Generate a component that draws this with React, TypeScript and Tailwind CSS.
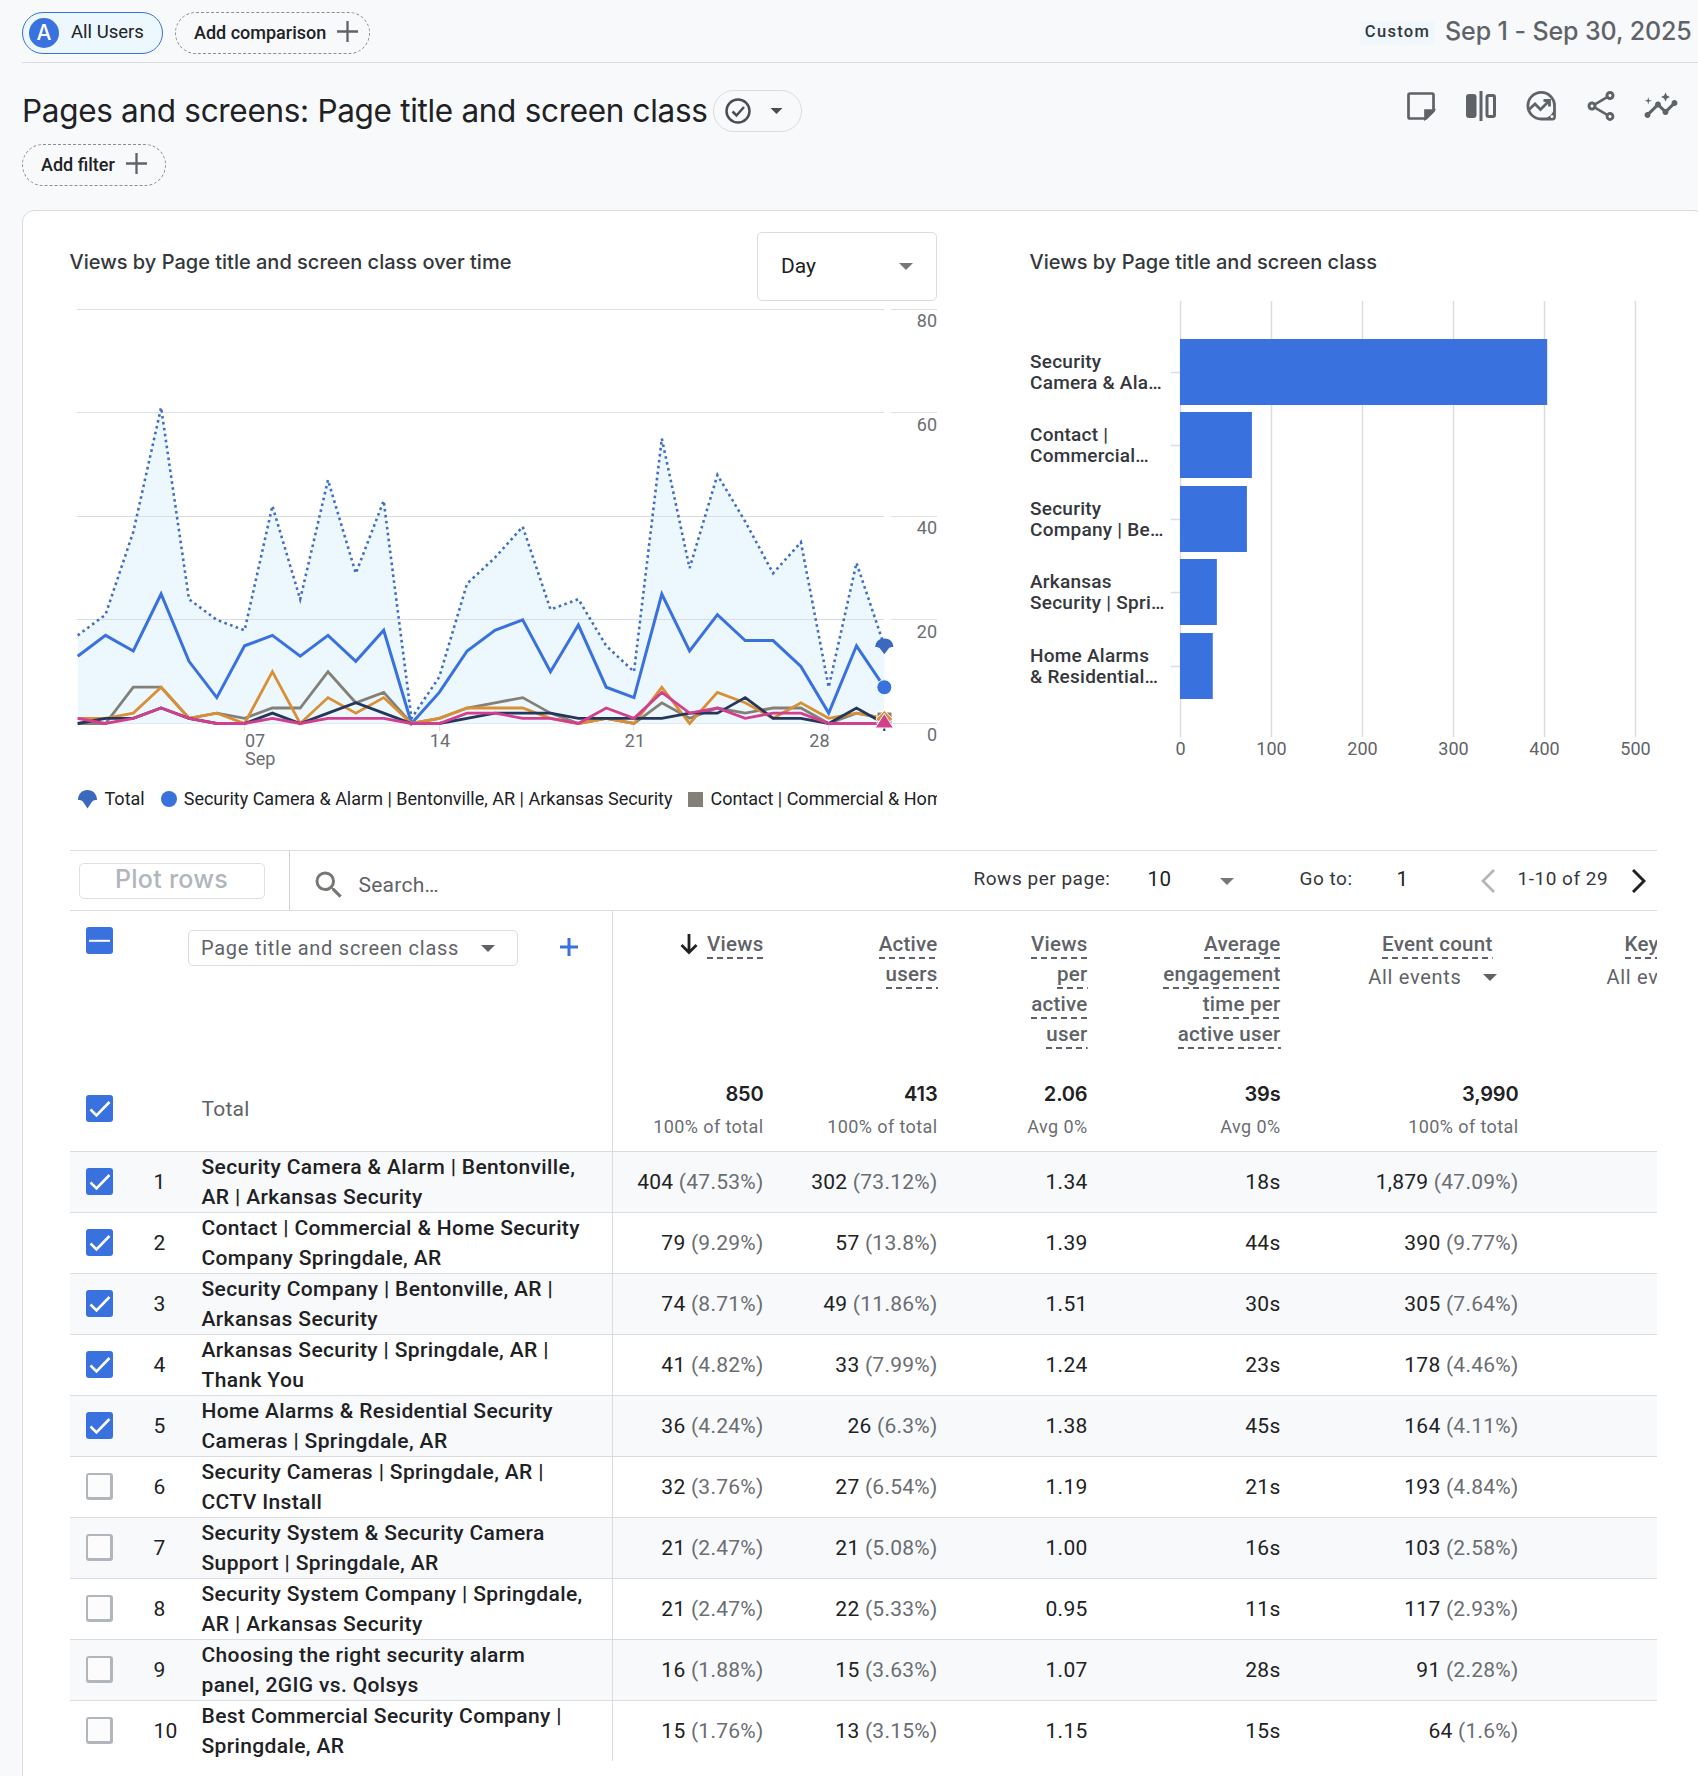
import React from "react";
import { MdInsights, MdOutlineShare, MdSearch } from "react-icons/md";

const TOTAL = [17, 21, 37, 61, 24, 20, 18, 42, 24, 47, 29, 43, 1, 9, 27, 32, 38, 22, 24, 15, 10, 55, 30, 48, 39, 29, 35, 7, 31, 15];
const CAMERA = [13, 17, 14, 25, 12, 5, 15, 17, 13, 17, 12, 18, 0, 6, 14, 18, 20, 10, 19, 7, 5, 25, 14, 21, 16, 16, 11, 2, 15, 7];
const CONTACT = [0, 0, 7, 7, 1, 2, 1, 3, 3, 10, 4, 6, 0, 1, 3, 4, 5, 2, 0, 1, 0, 4, 1, 3, 2, 3, 3, 0, 2, 1];
const COMPANY = [1, 1, 2, 7, 1, 2, 0, 10, 0, 5, 2, 5, 0, 1, 3, 3, 3, 1, 0, 1, 0, 7, 0, 6, 4, 1, 4, 1, 2, 1];
const ARKANSAS = [0, 1, 1, 3, 1, 0, 0, 2, 0, 2, 4, 2, 0, 0, 1, 2, 2, 2, 1, 1, 1, 1, 2, 2, 5, 1, 1, 0, 3, 0];
const HOME = [1, 0, 1, 3, 1, 0, 0, 1, 0, 1, 1, 1, 0, 0, 2, 2, 1, 1, 0, 3, 1, 6, 2, 3, 1, 2, 2, 0, 0, 0];

const px = (i: number) => 7.7 + i * 27.814;
const py = (v: number) => 423.5 - v * 5.18;
const points = (data: number[]) => data.map((v, i) => `${px(i).toFixed(1)},${py(v).toFixed(1)}`).join(" ");

const GOOGLE = "font-['Inter','Roboto',sans-serif]";

function Caret({ className = "" }: { className?: string }) {
  return (
    <svg className={className} width="14" height="7" viewBox="0 0 14 7">
      <path d="M0 0h14L7 7z" fill="currentColor" />
    </svg>
  );
}

function Plus({ size = 21, className = "" }: { size?: number; className?: string }) {
  return (
    <svg className={className} width={size} height={size} viewBox="0 0 21 21">
      <path d="M10.500 0v21M0 10.500h21" stroke="currentColor" strokeWidth="2.300" />
    </svg>
  );
}

const UMBRELLA = "M0 10C0 4 4 0 9.500 0S19 4 19 10c-2.500 0-4.500.5-5.500 2.500l-4 6-4-6C4.500 10.500 2.500 10 0 10z";

function LineChart() {
  return (
    <svg width="867" height="480" viewBox="0 0 867 480" className="block font-['Roboto',sans-serif]">
      {[80, 60, 40, 20, 0].map((v) => (
        <path key={v} d={`M7 ${Math.floor(py(v)) + 0.5}H814M821 ${Math.floor(py(v)) + 0.5}H867`} stroke="#dcdfe3" strokeWidth="1" />
      ))}
      <polygon points={`${px(0)},${py(0)} ${points(TOTAL)} ${px(29)},${py(0)}`} fill="#ecf7fe" />
      {[40, 20].map((v) => (
        <path key={v} d={`M7 ${Math.floor(py(v)) + 0.5}H814`} stroke="#d9dde1" strokeWidth="1" />
      ))}
      {[6, 13, 20, 27].map((i) => (
        <path key={i} d={`M${Math.floor(px(i)) + 0.5} 424v7`} stroke="#dfe2e6" strokeWidth="1" />
      ))}
      <g fill="none" strokeWidth="2.800" strokeLinejoin="miter">
        <polyline points={points(TOTAL)} stroke="#3f6fc4" strokeWidth="2.600" strokeDasharray="2.600 3.400" />
        <polyline points={points(CAMERA)} stroke="#3971de" strokeWidth="3" />
        <polyline points={points(CONTACT)} stroke="#838078" />
        <polyline points={points(COMPANY)} stroke="#d98f33" />
        <polyline points={points(ARKANSAS)} stroke="#24365c" />
        <polyline points={points(HOME)} stroke="#d23f8e" />
      </g>
      <path transform="translate(805.3 338.5) scale(.95 .85)" d={UMBRELLA} fill="#3b69bd" />
      <circle cx={px(29)} cy={py(7)} r="7.500" fill="#3971de" stroke="#fff" strokeWidth="1" />
      <path d="M807 412h15v12h-15z" fill="#838078" stroke="#fff" />
      <path d="M814.300 410.500l8.500 8.500-8.500 8.500-8.500-8.500z" fill="#d98f33" stroke="#fff" />
      <path d="M814.300 428v3" stroke="#24365c" strokeWidth="2" />
      <path d="M814.300 413.500l9.200 14.500h-18.400z" fill="#d23f8e" stroke="#fff" />
      <g fontSize="18" fill="#6a6d72">
        {[80, 60, 40, 20, 0].map((v) => (
          <text key={v} x="867" y={v === 60 || v === 20 ? py(v) + 18.3 : py(v) + 17.5} textAnchor="end">{v}</text>
        ))}
        <text x="175" y="447">07</text>
        <text x="175" y="465">Sep</text>
        <text x="380" y="447" textAnchor="end">14</text>
        <text x="575" y="447" textAnchor="end">21</text>
        <text x="759.5" y="447" textAnchor="end">28</text>
      </g>
    </svg>
  );
}

const BARS = [
  { y: 39, value: 403.5, lines: ["Security", "Camera & Ala…"] },
  { y: 112, value: 79, lines: ["Contact |", "Commercial…"] },
  { y: 186, value: 73.5, lines: ["Security", "Company | Be…"] },
  { y: 259, value: 40.5, lines: ["Arkansas", "Security | Spri…"] },
  { y: 333, value: 36, lines: ["Home Alarms", "& Residential…"] },
];

function BarChart() {
  return (
    <svg width="640" height="480" viewBox="0 0 640 480" className="block font-['Roboto',sans-serif]">
      {[0, 1, 2, 3, 4, 5].map((i) => (
        <g key={i}>
          <path d={`M${150.5 + i * 91} 1V437`} stroke="#d9dde1" strokeWidth="1.500" />
          <text x={150.5 + i * 91} y="455" fontSize="18" fill="#5f6368" textAnchor="middle">{i * 100}</text>
        </g>
      ))}
      {BARS.map((b) => (
        <g key={b.y}>
          <path d={`M141 ${b.y + 33.5}h9`} stroke="#d9dde1" strokeWidth="1.500" />
          <rect x="150" y={b.y} width={b.value * 0.91} height="66" fill="#3971de" />
          <text x="0" y={b.y + 29} fontSize="19" fontWeight="500" fill="#34373c" letterSpacing="0.25">{b.lines[0]}</text>
          <text x="0" y={b.y + 50.4} fontSize="19" fontWeight="500" fill="#34373c" letterSpacing="0.25">{b.lines[1]}</text>
        </g>
      ))}
    </svg>
  );
}

function Checkbox({ state }: { state: "on" | "off" | "mixed" }) {
  if (state === "off") return <div className="flex size-[27px] rounded-[3px] bg-[#b1b6bd] p-[2.500px]"><div className="flex-1 rounded-[1px] bg-[#fcfcfd]" /></div>;
  return (
    <div className="flex size-[27px] items-center justify-center rounded-[3px] bg-[#3971de]">
      <svg width="27" height="27" viewBox="0 0 27 27" fill="none" stroke="#fff" strokeWidth="2.600">
        {state === "on" ? <path d="M4.500 14.500l6 6L23.500 7" /> : <path d="M3 13.800h21" strokeWidth="2" />}
      </svg>
    </div>
  );
}

function Term({ children }: { children: React.ReactNode }) {
  return (
    <span className="block h-[30px] text-[20.500px] leading-[26px] font-medium whitespace-nowrap">
      <span className="inline-block h-[28px] bg-[repeating-linear-gradient(90deg,#5f6368_0_6px,transparent_6px_10px)] bg-[length:100%_2px] bg-bottom bg-no-repeat">
        {children}
      </span>
    </span>
  );
}

const ROWS: [string, string, boolean, string[], string[], string, string, string[]][] = [
  ["Security Camera & Alarm | Bentonville,", "AR | Arkansas Security", true, ["404", "(47.53%)"], ["302", "(73.12%)"], "1.34", "18s", ["1,879", "(47.09%)"]],
  ["Contact | Commercial & Home Security", "Company Springdale, AR", true, ["79", "(9.29%)"], ["57", "(13.8%)"], "1.39", "44s", ["390", "(9.77%)"]],
  ["Security Company | Bentonville, AR |", "Arkansas Security", true, ["74", "(8.71%)"], ["49", "(11.86%)"], "1.51", "30s", ["305", "(7.64%)"]],
  ["Arkansas Security | Springdale, AR |", "Thank You", true, ["41", "(4.82%)"], ["33", "(7.99%)"], "1.24", "23s", ["178", "(4.46%)"]],
  ["Home Alarms & Residential Security", "Cameras | Springdale, AR", true, ["36", "(4.24%)"], ["26", "(6.3%)"], "1.38", "45s", ["164", "(4.11%)"]],
  ["Security Cameras | Springdale, AR |", "CCTV Install", false, ["32", "(3.76%)"], ["27", "(6.54%)"], "1.19", "21s", ["193", "(4.84%)"]],
  ["Security System & Security Camera", "Support | Springdale, AR", false, ["21", "(2.47%)"], ["21", "(5.08%)"], "1.00", "16s", ["103", "(2.58%)"]],
  ["Security System Company | Springdale,", "AR | Arkansas Security", false, ["21", "(2.47%)"], ["22", "(5.33%)"], "0.95", "11s", ["117", "(2.93%)"]],
  ["Choosing the right security alarm", "panel, 2GIG vs. Qolsys", false, ["16", "(1.88%)"], ["15", "(3.63%)"], "1.07", "28s", ["91", "(2.28%)"]],
  ["Best Commercial Security Company |", "Springdale, AR", false, ["15", "(1.76%)"], ["13", "(3.15%)"], "1.15", "15s", ["64", "(1.6%)"]],
];

const GRID = "grid grid-cols-[84px_48px_411px_151px_174px_150px_193px_238px_138px]";

function Pair({ v }: { v: string[] }) {
  return (
    <div className="pt-[2px] text-right whitespace-nowrap">
      {v[0]} <span className="text-[#6a6d72]">{v[1]}</span>
    </div>
  );
}

function Totals({ a, b }: { a: string; b: string }) {
  return (
    <div className="pt-[2px] text-right whitespace-nowrap">
      <div className={`${GOOGLE} h-[30px] text-[20px] leading-[32px] font-semibold tracking-[-0.150px] text-[#202124]`}>{a}</div>
      <div className="mt-[4px] text-[18px] leading-[30px] tracking-[0.400px] text-[#6a6d72]">{b}</div>
    </div>
  );
}

export default function App() {
  return (
    <div className="h-[1776px] w-[1698px] overflow-hidden bg-[#f8f9fb] pl-[22px] font-['Roboto',sans-serif] text-[#202124]">
      <header className="flex h-[63px] items-start border-b-[1.500px] border-[#dadce0] pt-[12px]">
        <div className="flex h-[42px] w-[141px] items-center rounded-full border-[1.500px] border-[#3971de] bg-[#ecf7fe] pl-[6px]">
          <div className={`${GOOGLE} flex size-[30px] items-center justify-center rounded-full bg-[#3971de] text-[21px] font-medium text-white`}>A</div>
          <span className="ml-[12px] text-[18.500px] whitespace-nowrap">All Users</span>
        </div>
        <div className="ml-[12px] flex h-[42px] w-[195px] items-center rounded-full border border-dashed border-[#8a8e93] pl-[18px]">
          <span className="pb-[2px] text-[18px] font-medium whitespace-nowrap">Add comparison</span>
          <Plus className="-mt-[3px] ml-[11px] text-[#5f6368]" />
        </div>
        <div className="ml-auto flex items-center pr-[4px]">
          <div className="mt-[5px] flex h-[24px] w-[75px] items-center justify-center bg-[#f0f7fd] text-[16.500px] font-medium tracking-[1.300px] text-[#34373c]">Custom</div>
          <div className={`${GOOGLE} mt-[2px] ml-[10px] w-[249px] text-[25px] leading-[34px] font-medium tracking-[-0.100px] whitespace-nowrap text-[#5f6368]`}>Sep 1 - Sep 30, 2025</div>
        </div>
      </header>

      <div className="flex h-[81px] items-start justify-between pt-[27px]">
        <div className="flex items-center">
          <h1 className={`${GOOGLE} w-[691px] text-[31.500px] leading-[42px] tracking-[-0.310px] whitespace-nowrap`}>Pages and screens: Page title and screen class</h1>
          <div className="flex h-[42px] w-[89px] items-center rounded-full border border-[#dadce0] pl-[11px] text-[#4a4d51]">
            <svg width="26" height="26" viewBox="0 0 26 26" fill="none" stroke="currentColor" strokeWidth="2.500">
              <circle cx="13" cy="13" r="11.500" />
              <path d="M7.500 13.500l4 4L19 9" />
            </svg>
            <Caret className="ml-[19px] h-[6px] w-[13px]" />
          </div>
        </div>
        <div className="-mt-[2px] flex gap-[24px] pr-[19px] text-[#5f6368]">
          <svg width="36" height="36" viewBox="0 0 36 36" fill="none" stroke="currentColor" strokeWidth="2.700">
            <path d="M7 5.500h22a1.500 1.500 0 0 1 1.500 1.500v16l-7.500 7.500H7A1.500 1.500 0 0 1 5.500 29V7A1.500 1.500 0 0 1 7 5.500z" />
            <path d="M22.500 30v-7.500h7.500z" fill="currentColor" />
          </svg>
          <svg width="36" height="36" viewBox="0 0 36 36" fill="currentColor">
            <rect x="3" y="6" width="10.500" height="24" rx="3" />
            <rect x="16.500" y="3" width="3" height="30" />
            <rect x="24" y="7.500" width="7.500" height="21" rx="1.500" fill="none" stroke="currentColor" strokeWidth="3" />
          </svg>
          <svg width="36" height="36" viewBox="0 0 36 36" fill="none" stroke="currentColor" strokeWidth="2.800">
            <path d="M31.500 17.500A13.300 13.300 0 1 0 18.200 31h11.300a2 2 0 0 0 2-2z" />
            <path d="M19 31c6-.5 11.500-5 12.500-12v12z" fill="currentColor" stroke="none" />
            <path d="M5.500 22l6.500-6 5.500 5.500 8.500-8.500M20.500 12.500h6v6" />
            <circle cx="29" cy="28.500" r="1.500" fill="#f8f9fb" stroke="none" />
          </svg>
          <MdOutlineShare size={36} />
          <MdInsights size={36} />
        </div>
      </div>

      <div className="flex h-[42px] w-[144px] items-center rounded-full border border-dashed border-[#8a8e93] pl-[18px]">
        <span className="pb-[2px] text-[18px] font-medium whitespace-nowrap">Add filter</span>
        <Plus className="-mt-[3px] ml-[11px] text-[#5f6368]" />
      </div>

      <main className="mt-[24px] h-[1600px] w-[1684px] rounded-[12px] border-[1.500px] border-[#dadce0] bg-white pl-[46.500px]">
        <section className="flex h-[639px]">
          <div className="w-[960px]">
            <div className="flex h-[89px] w-[867px] items-start justify-between pt-[21px]">
              <h2 className={`${GOOGLE} mt-[15px] text-[20px] leading-[30px] font-medium whitespace-nowrap text-[#34373c]`}>Views by Page title and screen class over time</h2>
              <div className="flex h-[69px] w-[180px] items-center justify-between rounded-[5px] border-[1.500px] border-[#dadce0] pr-[23px] pl-[23.500px] text-[21px]">
                Day
                <Caret className="text-[#757873]" />
              </div>
            </div>
            <LineChart />
            <div className="mt-[7px] flex w-[867px] items-center overflow-hidden pl-[8px] text-[18px] leading-[24px] whitespace-nowrap">
              <svg width="19" height="19" viewBox="0 0 19 19" className="shrink-0">
                <path d={UMBRELLA} fill="#3b69bd" />
              </svg>
              <span className="ml-[8px]">Total</span>
              <span className="ml-[16px] size-[16px] shrink-0 rounded-full bg-[#3971de]" />
              <span className="ml-[7px]">Security Camera &amp; Alarm | Bentonville, AR | Arkansas Security</span>
              <span className="ml-[16px] size-[15px] shrink-0 bg-[#838078]" />
              <span className="ml-[7px]">Contact | Commercial &amp; Home Security</span>
            </div>
          </div>
          <div className="w-[640px]">
            <h2 className={`${GOOGLE} mt-[36px] mb-[23px] text-[20px] leading-[30px] font-medium whitespace-nowrap text-[#34373c]`}>Views by Page title and screen class</h2>
            <BarChart />
          </div>
        </section>

        <section className="w-[1587px] overflow-hidden text-[21px] tracking-[0.250px]">
          <div className="flex h-[61px] items-center border-y-[1.500px] border-[#dadce0]">
            <div className="flex h-full w-[220px] items-center border-r border-[#d0d3d7] pl-[9px]">
              <div className={`${GOOGLE} flex h-[36px] w-[186px] items-center justify-center rounded-[5px] border border-[#dbe0e5] pb-[2px] text-[25px] font-medium text-[#b1b6bd]`}>Plot rows</div>
            </div>
            <MdSearch className="mt-[8px] ml-[21px] text-[#757873]" size={36} />
            <span className="mt-[10px] ml-[12px] text-[#5f6368]">Search…</span>
            <div className="ml-auto flex h-full items-center pb-px text-[19px] tracking-[0.520px] text-[#34373c]">
              <span className="w-[174px] pb-[2px]">Rows per page:</span>
              <span className="w-[72px] pb-[2px] text-[20.500px] text-[#202124]">10</span>
              <Caret className="mt-[2px] text-[#757873]" />
              <span className="ml-[66px] w-[97px] pb-[2px]">Go to:</span>
              <span className="w-[84px] pb-[2px] text-[20.500px] text-[#202124]">1</span>
              <svg className="mt-[2px]" width="14" height="24" viewBox="0 0 14 24" fill="none" stroke="#b1b6bd" strokeWidth="2.700"><path d="M13 1L2 12l11 11" /></svg>
              <span className="ml-[23px] w-[114px] pb-[2px]">1-10 of 29</span>
              <svg className="mt-[2px] mr-[11px]" width="14" height="24" viewBox="0 0 14 24" fill="none" stroke="#202124" strokeWidth="3"><path d="M1 1l11 11L1 23" /></svg>
            </div>
          </div>

          <div className={`${GRID} h-[165px] text-[20px] text-[#5f6368]`}>
            <div className="pt-[16px] pl-[16px]"><Checkbox state="mixed" /></div>
            <div className="col-span-2 flex border-r-[1.500px] border-[#dadce0] pt-[19px] pl-[34px]">
              <div className="flex h-[36px] w-[330px] items-center rounded-[5px] border border-[#dadce0] pl-[12.500px]">
                <span className="w-[279.500px] tracking-[0.740px] whitespace-nowrap">Page title and screen class</span>
                <Caret />
              </div>
              <svg className="mt-[8px] ml-[42px]" width="18" height="18" viewBox="0 0 18 18"><path d="M9 0v18M0 9h18" stroke="#3971de" strokeWidth="3" /></svg>
            </div>
            <div className="flex justify-end pt-[20px]">
              <svg className="mt-[3px] mr-[9px]" width="18" height="21" viewBox="0 0 18 21" fill="none" stroke="#202124" strokeWidth="2.800"><path d="M9 0v19M1.500 11L9 18.500 16.500 11" /></svg>
              <Term>Views</Term>
            </div>
            <div className="flex flex-col items-end pt-[20px]"><Term>Active</Term><Term>users</Term></div>
            <div className="flex flex-col items-end pt-[20px]"><Term>Views</Term><Term>per</Term><Term>active</Term><Term>user</Term></div>
            <div className="flex flex-col items-end pt-[20px]"><Term>Average</Term><Term>engagement</Term><Term>time per</Term><Term>active user</Term></div>
            <div className="flex flex-col items-end pt-[20px] pr-[26px]">
              <Term>Event count</Term>
              <div className="-mr-[4px] flex items-center leading-[32px] tracking-[0.700px]">All events<Caret className="ml-[21px]" /></div>
            </div>
            <div className="pt-[20px] whitespace-nowrap">
              <div className="pl-[106px]"><Term>Key events</Term></div>
              <div className="pl-[88px] leading-[32px] tracking-[0.700px]">All events</div>
            </div>
          </div>

          <div className={`${GRID} h-[76px] border-b-[1.500px] border-[#dadce0]`}>
            <div className="pt-[19px] pl-[16px]"><Checkbox state="on" /></div>
            <div className="col-span-2 border-r-[1.500px] border-[#dadce0] pt-[18px] pl-[48px] leading-[30px] text-[#5f6368]">Total</div>
            <Totals a="850" b="100% of total" />
            <Totals a="413" b="100% of total" />
            <Totals a="2.06" b="Avg 0%" />
            <Totals a="39s" b="Avg 0%" />
            <Totals a="3,990" b="100% of total" />
          </div>

          {ROWS.map((r, i) => (
            <div key={i} className={`${GRID} h-[61px] items-center border-b-[1.500px] ${i % 2 === 0 ? "bg-[#f8f9fb]" : "bg-white"} ${i < 9 ? "border-[#dadce0]" : "border-transparent"}`}>
              <div className="pb-[2px] pl-[16px]"><Checkbox state={r[2] ? "on" : "off"} /></div>
              <div className="pt-[2px]">{i + 1}</div>
              <div className="h-full border-r-[1.500px] border-[#dadce0] leading-[30px] font-medium tracking-[0.370px] whitespace-nowrap">
                {r[0]}
                <br />
                {r[1]}
              </div>
              <Pair v={r[3]} />
              <Pair v={r[4]} />
              <div className="pt-[2px] text-right">{r[5]}</div>
              <div className="pt-[2px] text-right">{r[6]}</div>
              <Pair v={r[7]} />
            </div>
          ))}
        </section>
      </main>
    </div>
  );
}
